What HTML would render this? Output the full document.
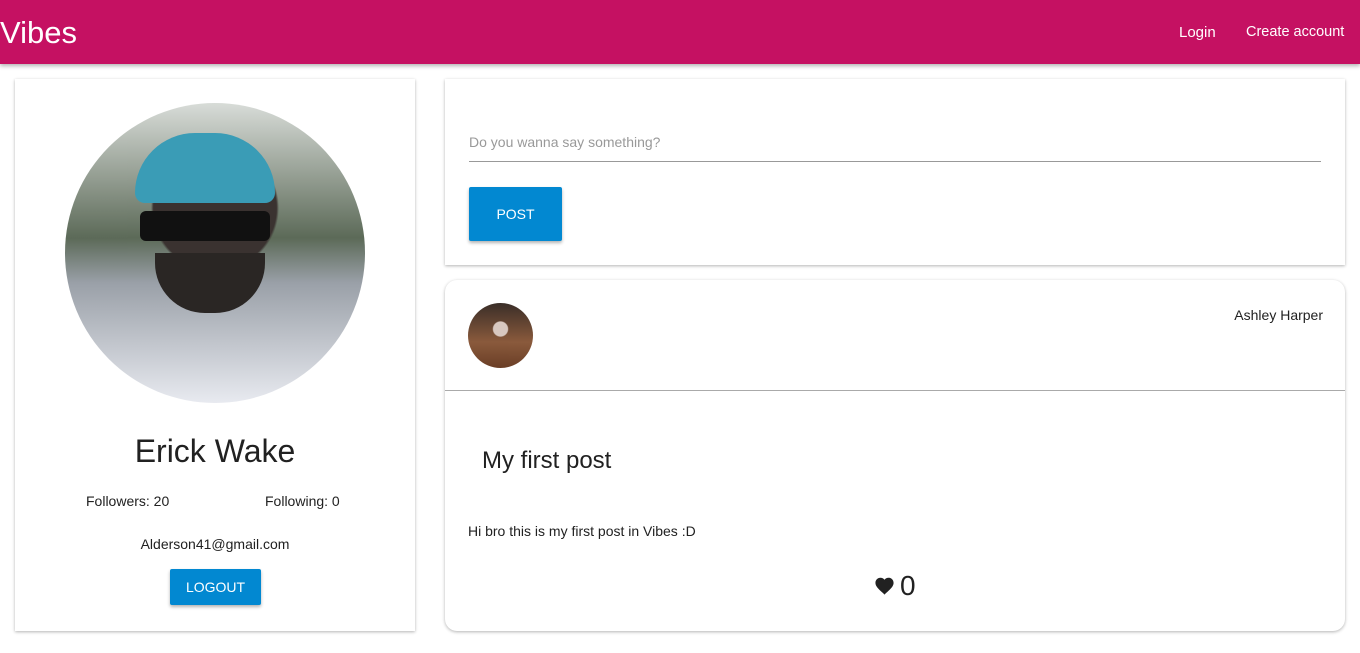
<!DOCTYPE html>
<html><head><style>
body{margin:0;width:1360px;height:653px;background:#fff;font-family:"Liberation Sans",sans-serif;color:#212121;position:relative;overflow:hidden}
.bar{position:absolute;left:0;top:0;width:1360px;height:64px;background:#c51162;box-shadow:0 2px 4px rgba(0,0,0,.3);color:#fff}
.card{position:absolute;background:#fff;box-shadow:0 1px 3px rgba(0,0,0,.3)}
.abs{position:absolute}
.btn{position:absolute;background:#0288d1;color:#fff;text-align:center;box-shadow:0 2px 3px rgba(0,0,0,.3);border-radius:2px}
</style></head><body>
<div class="bar">
<div class="abs" style="left:0;top:15px;font-size:31px">Vibes</div>
<div class="abs" style="left:1179px;top:24px;font-size:15px">Login</div>
<div class="abs" style="left:1246px;top:24px;font-size:14.5px">Create account</div>
</div>
<div class="card" style="left:15px;top:79px;width:400px;height:552px">
<div class="abs" style="left:50px;top:24px;width:300px;height:300px;border-radius:50%;overflow:hidden;background:radial-gradient(circle at 50% 35%,#3a3230 0 25%,transparent 26%),linear-gradient(#d8dcd8 0,#5c6a58 45%,#9aa0a8 60%,#e8eaf0 100%)">
<div class="abs" style="left:70px;top:30px;width:140px;height:70px;border-radius:60px 60px 10px 10px;background:#3a9cb6"></div>
<div class="abs" style="left:75px;top:108px;width:130px;height:30px;background:#111;border-radius:6px"></div>
<div class="abs" style="left:90px;top:150px;width:110px;height:60px;background:#2a2624;border-radius:0 0 50px 50px"></div>
</div>
<div class="abs" style="left:0;width:400px;top:354px;text-align:center;font-size:32px">Erick Wake</div>
<div class="abs" style="left:71px;top:414px;font-size:14px">Followers: 20</div>
<div class="abs" style="left:250px;top:414px;font-size:14px">Following: 0</div>
<div class="abs" style="left:0;width:400px;top:457px;text-align:center;font-size:14px">Alderson41@gmail.com</div>
<div class="btn" style="left:155px;top:490px;width:91px;height:36px;line-height:36px;font-size:14px">LOGOUT</div>
</div>
<div class="card" style="left:445px;top:79px;width:900px;height:186px">
<div class="abs" style="left:24px;top:55px;font-size:14px;color:#999">Do you wanna say something?</div>
<div class="abs" style="left:24px;top:82px;width:852px;height:1px;background:#999"></div>
<div class="btn" style="left:24px;top:108px;width:93px;height:54px;line-height:54px;font-size:14px">POST</div>
</div>
<div class="card" style="left:445px;top:280px;width:900px;height:351px;border-radius:12px">
<div class="abs" style="left:23px;top:23px;width:65px;height:65px;border-radius:50%;background:radial-gradient(circle at 50% 40%,#d8c8c0 0 14%,transparent 16%),linear-gradient(#3a2e28,#8a5a3c 60%,#6a3e26)"></div>
<div class="abs" style="right:22px;top:27px;font-size:14px">Ashley Harper</div>
<div class="abs" style="left:0;top:110px;width:900px;height:1px;background:#aaa"></div>
<div class="abs" style="left:37px;top:167px;font-size:24px">My first post</div>
<div class="abs" style="left:23px;top:243px;font-size:14px">Hi bro this is my first post in Vibes :D</div>
<svg class="abs" style="left:429px;top:296px" width="21" height="19" viewBox="0 0 24 22"><path d="M12 21.5 10.5 20C5 15 1.5 11.9 1.5 7.9 1.5 4.6 4 2 7.3 2c1.9 0 3.6.9 4.7 2.3C13.1 2.9 14.8 2 16.7 2 20 2 22.5 4.6 22.5 7.9c0 4-3.5 7.1-9 12.1z" fill="#212121"/></svg>
<div class="abs" style="left:455px;top:290px;font-size:28px;line-height:32px">0</div>
</div>
</body></html>
